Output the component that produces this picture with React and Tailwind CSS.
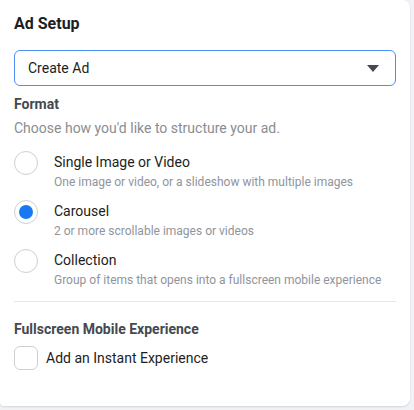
import React from "react";

function Radio({ checked }) {
  return (
    <div className="w-6 h-6 rounded-full border border-[#ccd0d5] bg-white flex items-center justify-center shrink-0">
      {checked && <div className="w-[14px] h-[14px] rounded-full bg-[#1877f2]" />}
    </div>
  );
}

function Option({ title, sub, checked }) {
  return (
    <div className="flex gap-4 items-start">
      <div className="pt-[1px]"><Radio checked={checked} /></div>
      <div className="flex flex-col">
        <div className="text-[14px] leading-[24px] text-[#1c1e21]">{title}</div>
        <div className="text-[12px] leading-[16px] text-[#90949c]">{sub}</div>
      </div>
    </div>
  );
}

export default function App() {
  return (
    <div className="w-[414px] h-[410px] bg-[#f0f2f5] font-['Roboto',sans-serif]">
      <div className="w-[410px] h-[406px] bg-white rounded-r-[8px] rounded-bl-[4px] shadow-[0_1px_2px_rgba(0,0,0,0.12)] px-[14px] pt-[13px]">
        <div className="text-[16px] leading-[22px] font-bold text-[#1c1e21]">Ad Setup</div>
        <div className="mt-[15px] h-[36px] border border-[#4b8ff5] rounded-[6px] flex items-center justify-between pl-[13px] pr-[16px]">
          <span className="text-[14px] text-[#1c1e21]">Create Ad</span>
          <svg width="12" height="7" viewBox="0 0 12 7"><path d="M0 0h12L6 7z" fill="#444950" /></svg>
        </div>
        <div className="mt-[8px] text-[14px] leading-[20px] font-bold text-[#444950]">Format</div>
        <div className="mt-[4px] text-[14px] leading-[20px] text-[#8a8d91]">Choose how you'd like to structure your ad.</div>
        <div className="mt-[12px] flex flex-col gap-[9px]">
          <Option title="Single Image or Video" sub="One image or video, or a slideshow with multiple images" />
          <Option title="Carousel" sub="2 or more scrollable images or videos" checked />
          <Option title="Collection" sub="Group of items that opens into a fullscreen mobile experience" />
        </div>
        <div className="mt-[13px] h-px bg-[#e4e6eb]" />
        <div className="mt-[17px] text-[14px] leading-[20px] font-bold text-[#444950]">Fullscreen Mobile Experience</div>
        <div className="mt-[7px] flex items-center gap-2">
          <div className="w-6 h-6 rounded-[6px] border border-[#ccd0d5] bg-white" />
          <span className="text-[14px] text-[#1c1e21]">Add an Instant Experience</span>
        </div>
      </div>
    </div>
  );
}
